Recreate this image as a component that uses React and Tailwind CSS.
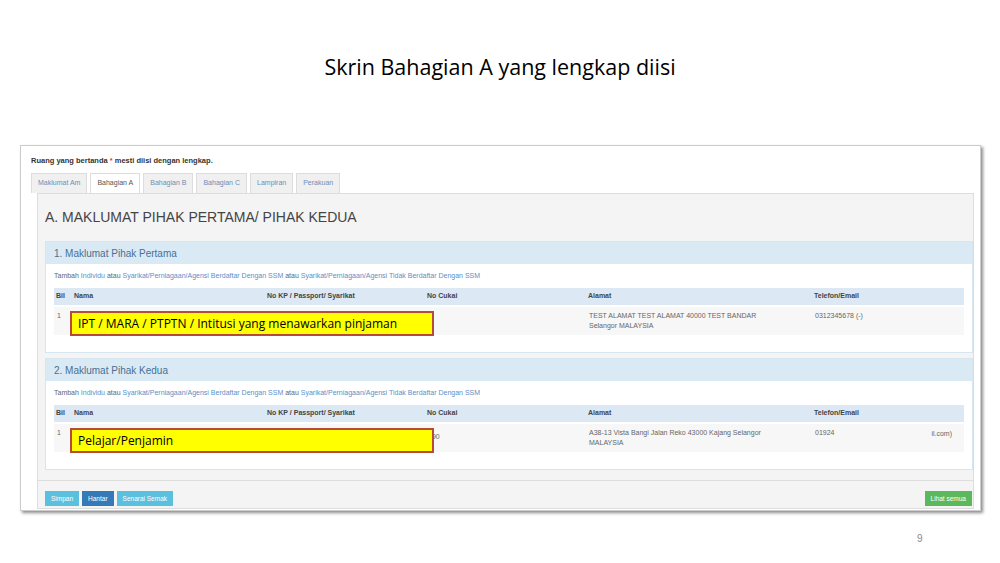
export default function App() {
  const link = "text-[#5b8fc7]";
  const cols = "grid grid-cols-[18px_193px_160px_161px_226px_1fr]";
  const Tambah = () => (
    <div className="px-[8px] h-[24px] flex items-center text-[7px] text-[#666]">
      Tambah&nbsp;<span className={link}>Individu</span>&nbsp;atau&nbsp;<span className={link}>Syarikat/Perniagaan/Agensi Berdaftar Dengan SSM</span>&nbsp;atau&nbsp;<span className={link}>Syarikat/Perniagaan/Agensi Tidak Berdaftar Dengan SSM</span>
    </div>
  );
  const Head = () => (
    <div className={`mx-[8px] h-[17px] bg-[#dce9f5] items-center text-[7px] font-bold text-[#444] pl-[2px] ${cols}`}>
      <span>Bil</span>
      <span>Nama</span>
      <span>No KP / Passport/ Syarikat</span>
      <span>No Cukai</span>
      <span>Alamat</span>
      <span>Telefon/Email</span>
    </div>
  );
  const Row = ({ label, addr1, addr2, tel, extra, cukai }) => (
    <div className={`mx-[8px] mt-[2px] h-[28px] bg-[#f7f7f7] relative text-[7px] text-[#666] pl-[3px] pt-[4px] ${cols}`}>
      <span>1</span>
      <span></span>
      <span></span>
      <span className="pt-[4px]">{cukai}</span>
      <div className="leading-[10px]">{addr1}<br />{addr2}</div>
      <div className="flex justify-between pr-[12px]">
        <span>{tel}</span>
        {extra && <span className="pt-[1px]">{extra}</span>}
      </div>
      <div className="absolute left-[16px] top-[4px] w-[364px] h-[25px] bg-[#ffff00] border-2 border-[#b84a3a] flex items-center pl-[6px] text-[12px] text-black" style={{ fontFamily: "'Open Sans', sans-serif" }}>{label}</div>
    </div>
  );
  return (
    <div className="w-[1000px] h-[563px] bg-white flex flex-col" style={{ fontFamily: "'Liberation Sans', Arial, sans-serif" }}>
      <div className="pt-[51px] h-[145px] text-center text-[21.5px] text-black" style={{ fontFamily: "'Open Sans', sans-serif" }}>Skrin Bahagian A yang lengkap diisi</div>
      <div className="ml-[20px] w-[961px] h-[366px] bg-white border border-[#ccc] shadow-[2px_2px_3px_rgba(0,0,0,0.45)] pl-[10px] pt-[9px]">
        <div className="text-[7.5px] font-bold text-[#333] h-[18px]">Ruang yang bertanda <span className="text-red-500">*</span> mesti diisi dengan lengkap.</div>
        <div className="flex h-[20px] text-[7px] text-[#6a8fb8]">
          {["Maklumat Am", "Bahagian A", "Bahagian B", "Bahagian C", "Lampiran", "Perakuan"].map((t, i) => (
            <div key={t} className={`px-[6px] mr-[3px] flex items-center border border-[#ddd] border-b-0 ${i === 1 ? "bg-white text-[#555]" : "bg-[#f0f0f0]"}`}>{t}</div>
          ))}
        </div>
        <div className="ml-[6px] w-[937px] h-[316px] bg-[#f4f4f4] border border-[#ddd] flex flex-col">
          <div className="h-[47px] pl-[7px] flex items-center text-[14px] text-[#444]">A. MAKLUMAT PIHAK PERTAMA/ PIHAK KEDUA</div>
          <div className="ml-[7px] bg-white h-[112px] border border-[#d5e6f0]">
            <div className="h-[22px] bg-[#d9eaf5] pl-[8px] flex items-center text-[10px] text-[#4a6f94]">1. Maklumat Pihak Pertama</div>
            <Tambah />
            <Head />
            <Row label="IPT / MARA / PTPTN / Intitusi yang menawarkan pinjaman" addr1="TEST ALAMAT TEST ALAMAT 40000 TEST BANDAR" addr2="Selangor MALAYSIA" tel="0312345678 (-)" />
          </div>
          <div className="ml-[7px] mt-[5px] bg-white h-[112px] border border-[#d5e6f0]">
            <div className="h-[22px] bg-[#d9eaf5] pl-[8px] flex items-center text-[10px] text-[#4a6f94]">2. Maklumat Pihak Kedua</div>
            <Tambah />
            <Head />
            <Row label="Pelajar/Penjamin" cukai="390" addr1="A38-13 Vista Bangi Jalan Reko 43000 Kajang Selangor" addr2="MALAYSIA" tel="01924" extra="il.com)" />
          </div>
          <div className="flex-1 border-t border-[#ddd] mt-[10px] flex items-end pb-[2px] pl-[7px] pr-[1px] gap-[3px] text-[6.5px] text-white">
            <div className="h-[15px] px-[6px] flex items-center bg-[#5bc0de]">Simpan</div>
            <div className="h-[15px] px-[6px] flex items-center bg-[#337ab7]">Hantar</div>
            <div className="h-[15px] px-[6px] flex items-center bg-[#5bc0de]">Senarai Semak</div>
            <div className="ml-auto h-[15px] px-[6px] flex items-center bg-[#5cb85c]">Lihat semua</div>
          </div>
        </div>
      </div>
      <div className="pl-[917px] pt-[20px] text-[10px] text-[#888]">9</div>
    </div>
  );
}
